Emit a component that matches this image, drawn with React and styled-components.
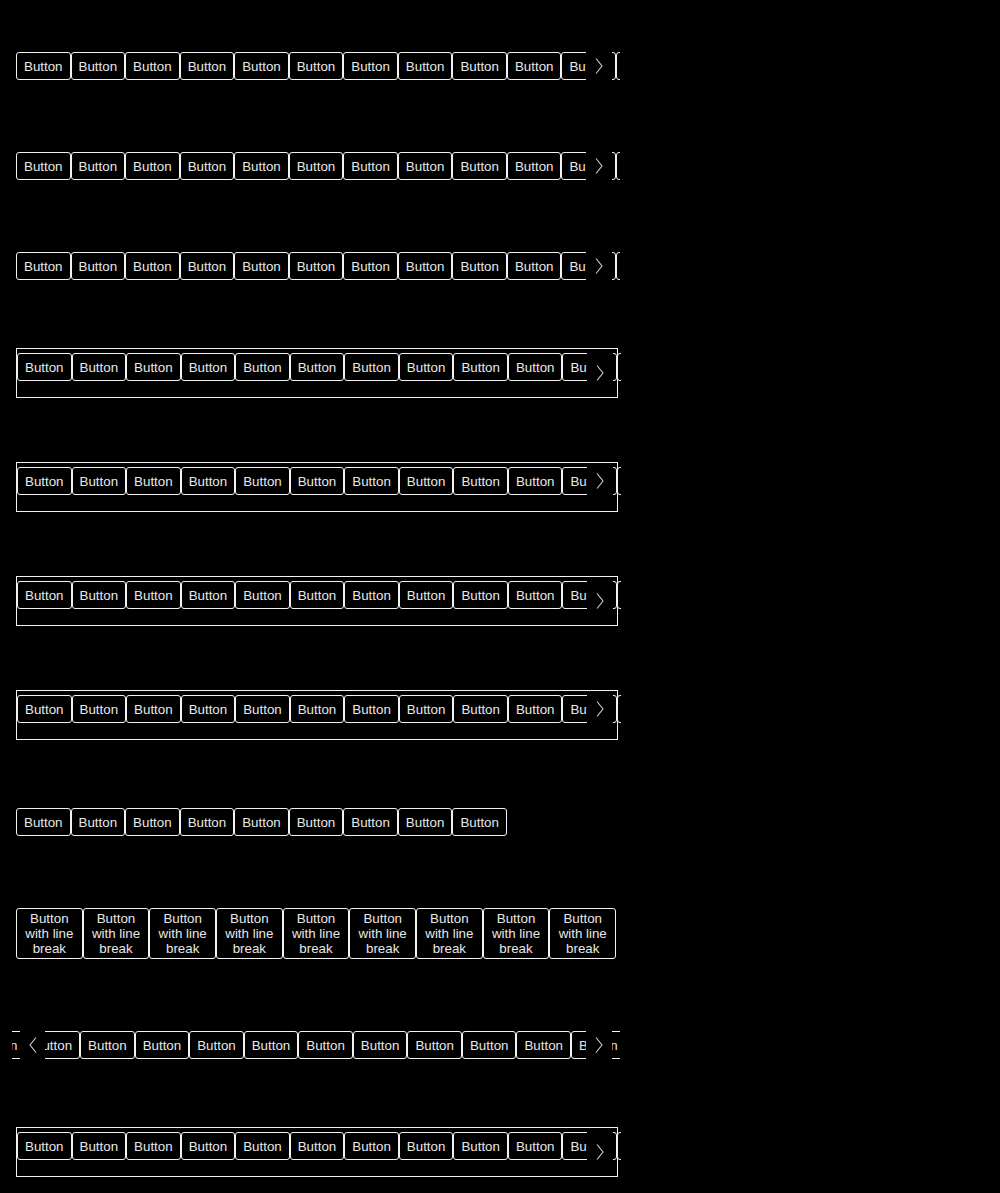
import React from 'react';
import styled, { createGlobalStyle, css } from 'styled-components';

const GlobalStyle = createGlobalStyle`
  html, body {
    margin: 0;
    padding: 0;
    background: #000;
    min-height: 100%;
  }
  body {
    font-family: "Liberation Sans", Arial, sans-serif;
    font-size: 13.333px;
    color: #e8e8e8;
  }
`

const Page = styled.div`
  padding: 16px;
  min-height: 1193px;
  box-sizing: border-box;
  background: #000;
`
const Column = styled.div`
  width: 600px;
  display: flex;
  flex-direction: column;
`
const Section = styled.div`
  display: flex;
  flex-direction: column;
  margin: ${props => props.$boxed ? '32px 0' : '36px 0'};
`
const Box = styled.div`
  box-sizing: content-box;
  align-self: flex-start;
  width: 600px;
  height: 48px;
  border: 1px solid #f2f2f2;
  display: flex;
  align-items: flex-start;
`
const Viewport = styled.div`
  position: relative;
  overflow: hidden;
  margin: 0 -4px;
  box-sizing: border-box;
  ${props => props.$inBox && css`
    flex: 1 1 auto;
  `}
  ${props => props.$inBox && (props.$fill ? css`
    align-self: stretch;
    padding-top: 4px;
  ` : css`
    margin-top: 4px;
  `)}
`
const Track = styled.div`
  display: flex;
  padding: 0 4px;
  transform: translateX(-${props => props.$offset || 0}px);
`
const Plain = styled.div`
  display: flex;
`
const Button = styled.div`
  flex-shrink: 0;
  box-sizing: border-box;
  height: 28px;
  padding: 1px 7px 0;
  border: 1px solid #f2f2f2;
  border-radius: 3px;
  line-height: 26px;
  white-space: nowrap;
  color: #e8e8e8;
  background: #000;
`
const WrapButton = styled.div`
  flex: 1 1 0;
  box-sizing: border-box;
  padding: 2px 5px;
  border: 1px solid #f2f2f2;
  border-radius: 3px;
  line-height: 15px;
  text-align: center;
  color: #e8e8e8;
`
const Overlay = styled.div`
  position: absolute;
  top: 0;
  bottom: 0;
  width: ${props => props.$side === 'left' ? '25px' : '26.5px'};
  ${props => props.$side}: 8px;
  background: #000;
  display: flex;
  align-items: center;
  justify-content: center;
`

const Chevron = ({ dir }) => (
  <svg width="8" height="16" viewBox="0 0 8 16">
    <polyline
      points={dir === 'left' ? '7,0.5 1,8 7,15.5' : '1,0.5 7,8 1,15.5'}
      fill="none"
      stroke="#d0d0d0"
      strokeWidth="1.1"
    />
  </svg>
)

const many = Array.from({ length: 20 })

const Buttons = ({ count }) =>
  Array.from({ length: count }).map((_, i) => <Button key={i}>Button</Button>)

const ScrollRow = ({ offset, left, inBox, fill }) => (
  <Viewport $inBox={inBox} $fill={fill}>
    <Track $offset={offset}>
      <Buttons count={many.length} />
    </Track>
    {left ? <Overlay $side="left"><Chevron dir="left" /></Overlay> : null}
    <Overlay $side="right"><Chevron dir="right" /></Overlay>
  </Viewport>
)

const BoxedRow = ({ fill }) => (
  <Section $boxed>
    <Box>
      <ScrollRow inBox fill={fill} />
    </Box>
  </Section>
)

export default function App() {
  return (
    <Page>
      <GlobalStyle />
      <Column>
        <Section><ScrollRow /></Section>
        <Section><ScrollRow /></Section>
        <Section><ScrollRow /></Section>
        <BoxedRow fill />
        <BoxedRow />
        <BoxedRow fill />
        <BoxedRow />
        <Section>
          <Plain><Buttons count={9} /></Plain>
        </Section>
        <Section>
          <Plain>
            {Array.from({ length: 9 }).map((_, i) => (
              <WrapButton key={i}>Button with line break</WrapButton>
            ))}
          </Plain>
        </Section>
        <Section><ScrollRow offset={45} left /></Section>
        <BoxedRow fill />
      </Column>
    </Page>
  )
}
